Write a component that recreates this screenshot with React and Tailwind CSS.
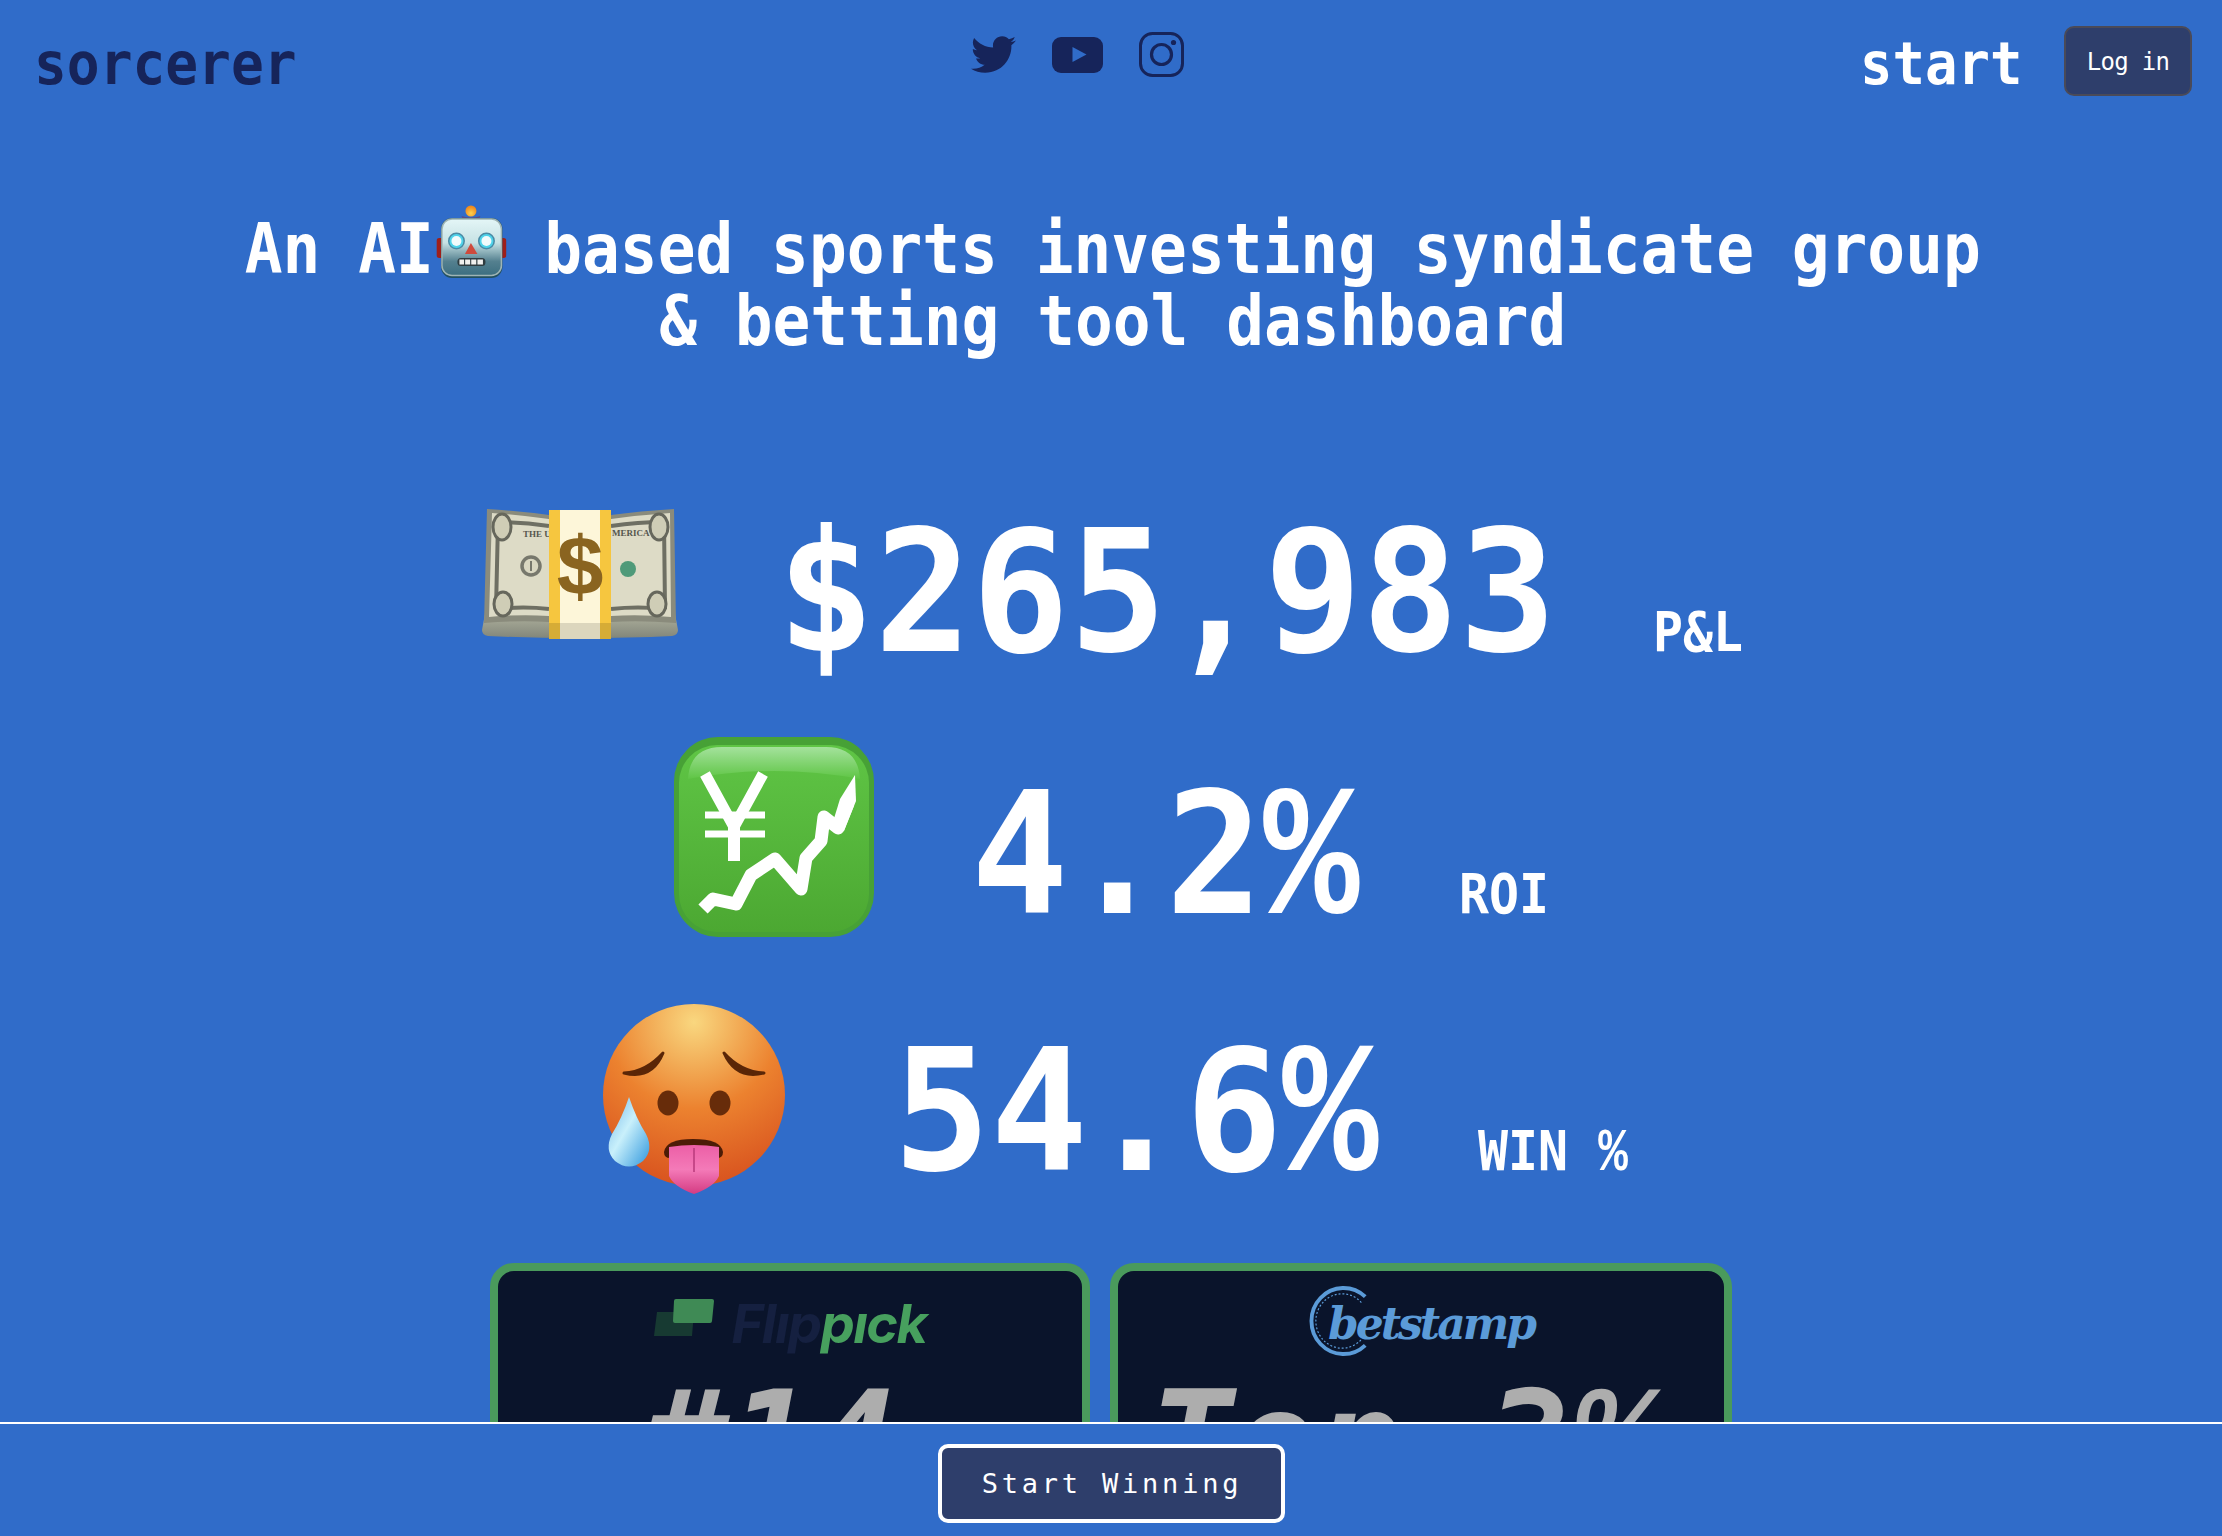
import { FaTwitter } from 'react-icons/fa'

const mono = "font-['DejaVu_Sans_Mono',monospace]"
const percent = "inline-block origin-left scale-x-90 font-['Liberation_Mono',monospace] text-[1.1em] leading-none"

function YoutubeIcon() {
  return (
    <svg viewBox="0 0 51 36" className="w-[51px] h-[36px]">
      <rect x="0" y="0" width="51" height="36" rx="9" fill="#16245a" />
      <path d="M20.5 10 L34.5 17.5 L20.5 25Z" fill="#306cc9" />
    </svg>
  )
}

function InstagramIcon() {
  return (
    <svg viewBox="0 0 45 45" className="w-[45px] h-[45px]" fill="none" stroke="#16245a">
      <rect x="1.5" y="1.5" width="42" height="42" rx="12" strokeWidth="3" />
      <circle cx="22.5" cy="22.5" r="10" strokeWidth="3.2" />
      <circle cx="34.5" cy="10.5" r="2.6" fill="#16245a" stroke="none" />
    </svg>
  )
}

function RobotEmoji() {
  return (
    <svg viewBox="0 0 70 73" className="inline-block w-[78px] h-[73px] ml-[3px] align-[-5px]" preserveAspectRatio="none">
      <defs>
        <linearGradient id="robotHead" x1="0" y1="0" x2="0" y2="1">
          <stop offset="0" stopColor="#e4f6f7" />
          <stop offset="0.42" stopColor="#c7e2e4" />
          <stop offset="0.75" stopColor="#54808f" />
          <stop offset="1" stopColor="#3c6e80" />
        </linearGradient>
        <radialGradient id="robotBall" cx="0.5" cy="0.7" r="0.6">
          <stop offset="0" stopColor="#fdd24f" />
          <stop offset="1" stopColor="#f08a1d" />
        </radialGradient>
      </defs>
      <rect x="0" y="33" width="7" height="20" rx="3" fill="#9d1f1a" />
      <rect x="63" y="33" width="7" height="20" rx="3" fill="#9d1f1a" />
      <path d="M25 11 Q35 14 44 11 Q42 18 35 18 Q27 18 25 11Z" fill="#5a4d86" />
      <circle cx="34.5" cy="6" r="5.5" fill="url(#robotBall)" />
      <rect x="4.6" y="13" width="61.4" height="60" rx="11" fill="#23505f" />
      <rect x="5.5" y="14" width="59.5" height="56.5" rx="10" fill="url(#robotHead)" stroke="#9fb4b4" strokeWidth="1.5" />
      <circle cx="20" cy="36" r="8.5" fill="#4a8ba5" />
      <circle cx="20" cy="36" r="7" fill="#4fd3ea" />
      <circle cx="20" cy="36" r="5" fill="#f2fbfc" />
      <circle cx="50" cy="36" r="8.5" fill="#4a8ba5" />
      <circle cx="50" cy="36" r="7" fill="#4fd3ea" />
      <circle cx="50" cy="36" r="5" fill="#f2fbfc" />
      <path d="M34.5 38 L41 49 L28.5 49Z" fill="#cf4a3c" />
      <rect x="21" y="53" width="28" height="8" rx="3.5" fill="#2f3c40" />
      <rect x="23" y="54.5" width="4.6" height="5" fill="#f0f0ee" />
      <rect x="28.7" y="54.5" width="5" height="5" fill="#f0f0ee" />
      <rect x="34.8" y="54.5" width="5" height="5" fill="#f0f0ee" />
      <rect x="41" y="54.5" width="5.5" height="5" fill="#f0f0ee" />
    </svg>
  )
}

function MoneyEmoji() {
  return (
    <svg viewBox="0 0 200 200" className="w-[200px] h-[200px] shrink-0">
      <defs>
        <linearGradient id="moneyStack" x1="0" y1="0" x2="0" y2="1">
          <stop offset="0" stopColor="#b3b5a1" />
          <stop offset="1" stopColor="#82867a" />
        </linearGradient>
      </defs>
      <path d="M5 140 Q50 136 100 138 Q150 136 195 140 L198 156 Q198 161 192 162 Q150 164 100 164 Q50 164 8 162 Q2 161 2 156Z" fill="url(#moneyStack)" />
      <path d="M7 35 Q40 37 69 41 L131 41 Q160 37 194 35 L196 149 Q160 146 131 148 L69 148 Q40 146 4 149Z" fill="#8a8b7c" />
      <path d="M12 39 Q40 41 69 45 L131 45 Q160 41 190 39 L191 143 Q160 140 131 142 L69 142 Q40 140 9 143Z" fill="#dddbc6" />
      <path d="M18 48 Q44 48 69 52 M131 52 Q158 48 184 48 M16 135 Q44 132 69 135 M131 135 Q158 132 185 135 M18 48 L16 135 M184 48 L185 135" stroke="#6e6f63" strokeWidth="4" fill="none" />
      <ellipse cx="22" cy="53" rx="9" ry="13" fill="#cfcdb6" stroke="#66675c" strokeWidth="3" />
      <ellipse cx="179" cy="53" rx="9" ry="13" fill="#cfcdb6" stroke="#66675c" strokeWidth="3" />
      <ellipse cx="23" cy="130" rx="9" ry="12" fill="#cfcdb6" stroke="#66675c" strokeWidth="3" />
      <ellipse cx="177" cy="130" rx="9" ry="12" fill="#cfcdb6" stroke="#66675c" strokeWidth="3" />
      <circle cx="51" cy="92" r="9" fill="#d9d7c1" stroke="#77786c" strokeWidth="3.5" />
      <path d="M51 87 L51 97" stroke="#77786c" strokeWidth="2" />
      <circle cx="148" cy="95" r="8" fill="#4f9a79" />
      <text x="43" y="63" fontSize="9" fontWeight="700" fill="#55564d" fontFamily="'Liberation Serif', serif">THE UN</text>
      <text x="132" y="62" fontSize="9" fontWeight="700" fill="#55564d" fontFamily="'Liberation Serif', serif">MERICA</text>
      <rect x="69" y="36" width="62" height="129" fill="#f6c63f" />
      <rect x="80" y="36" width="40" height="129" fill="#fdf6d9" />
      <rect x="69" y="149" width="62" height="16" fill="#000" opacity="0.13" />
      <text x="100" y="121" textAnchor="middle" fontSize="84" fontWeight="700" fill="#8a6420" fontFamily="'Liberation Sans', sans-serif">$</text>
    </svg>
  )
}

function ChartEmoji() {
  return (
    <svg viewBox="0 0 200 200" className="w-[200px] h-[200px] shrink-0">
      <defs>
        <linearGradient id="chartBg" x1="0" y1="0" x2="0" y2="1">
          <stop offset="0" stopColor="#5fc545" />
          <stop offset="1" stopColor="#4ca832" />
        </linearGradient>
        <linearGradient id="chartShine" x1="0" y1="0" x2="0" y2="1">
          <stop offset="0" stopColor="#a4e29c" />
          <stop offset="1" stopColor="#5fc545" />
        </linearGradient>
      </defs>
      <rect x="0" y="0" width="200" height="200" rx="44" fill="#47a136" />
      <rect x="5" y="8" width="190" height="187" rx="38" fill="url(#chartBg)" />
      <path d="M14 42 Q16 10 48 10 L152 10 Q184 10 186 42 Q100 26 14 42Z" fill="url(#chartShine)" />
      <path d="M31 37 L60 90 L89 37" stroke="#fff" strokeWidth="11" fill="none" />
      <path d="M60 88 L60 124" stroke="#fff" strokeWidth="12" fill="none" />
      <path d="M31 78 L91 78 M31 97 L91 97" stroke="#fff" strokeWidth="7" fill="none" />
      <polyline points="29,172 39,162 62,167 77,138 101,122 127,152 132,121 147,104 150,80 164,91 174,66" stroke="#fff" strokeWidth="13" fill="none" strokeLinejoin="round" />
      <path d="M166 62 L181 38 L182 64 L170 94 L158 88Z" fill="#fff" />
    </svg>
  )
}

function FaceEmoji() {
  return (
    <svg viewBox="0 0 200 200" className="w-[200px] h-[200px] shrink-0">
      <defs>
        <radialGradient id="faceSkin" cx="0.5" cy="0.1" r="0.95">
          <stop offset="0" stopColor="#f9d77f" />
          <stop offset="0.22" stopColor="#f3b25c" />
          <stop offset="0.5" stopColor="#ec822f" />
          <stop offset="1" stopColor="#d64e1d" />
        </radialGradient>
        <linearGradient id="faceTongue" x1="0" y1="0" x2="0" y2="1">
          <stop offset="0" stopColor="#ec5fa6" />
          <stop offset="0.5" stopColor="#f47ab8" />
          <stop offset="1" stopColor="#d43b82" />
        </linearGradient>
        <linearGradient id="faceTear" x1="0" y1="0" x2="1" y2="1">
          <stop offset="0" stopColor="#6fb6e8" />
          <stop offset="0.45" stopColor="#c9f0fb" />
          <stop offset="1" stopColor="#2f97dd" />
        </linearGradient>
      </defs>
      <circle cx="98" cy="95" r="91" fill="url(#faceSkin)" />
      <path d="M28 73 Q50 72 67 53 Q56 80 28 73Z" fill="#5a2607" stroke="#5a2607" strokeWidth="3" strokeLinejoin="round" />
      <path d="M128 53 Q145 72 168 73 Q140 80 128 53Z" fill="#5a2607" stroke="#5a2607" strokeWidth="3" strokeLinejoin="round" />
      <ellipse cx="72" cy="103" rx="10.5" ry="12.5" fill="#672c0a" />
      <ellipse cx="124" cy="103" rx="10.5" ry="12.5" fill="#672c0a" />
      <path d="M68 152 Q70 139 97 139 Q125 139 127 152 Q127 158 121 158 L74 158 Q68 158 68 152Z" fill="#4c1c06" />
      <path d="M73 147 Q98 143 123 147 L123 176 Q118 187 98 194 Q78 187 73 176Z" fill="url(#faceTongue)" />
      <path d="M98 148 L98 172" stroke="#b83a7b" strokeWidth="1.5" />
      <path d="M33 97 Q40 118 50 134 Q58 150 47 161 Q33 172 19 161 Q8 150 16 134 Q26 118 33 97Z" fill="url(#faceTear)" />
    </svg>
  )
}

function Stat({ emoji, value, unit, width, label, labelUnit, labelWidth, offset }) {
  return (
    <div className="flex justify-center items-start h-[263px]">
      {emoji}
      <div className={`flex items-baseline ml-[97px] ${offset}`}>
        <div className={`text-[170px] leading-[200px] font-bold text-white whitespace-nowrap origin-left scale-x-[0.952] ${mono} ${width}`}>
          {value}{unit && <span className={percent}>{unit}</span>}
        </div>
        <div className={`ml-[100px] text-[56px] leading-[60px] font-bold text-white whitespace-pre origin-left scale-x-[0.89] ${mono} ${labelWidth}`}>
          {label}{labelUnit && <span className={percent}>{labelUnit}</span>}
        </div>
      </div>
    </div>
  )
}

export default function App() {
  return (
    <div className="relative h-screen overflow-hidden bg-[#306cc9]">
      <header className="flex items-start pl-[34px] pr-[30px] pt-[26px]">
        <div className={`w-[264px] mt-[9px] text-[58px] leading-[58px] font-bold text-[#16245a] origin-left scale-x-[0.94] ${mono}`}>sorcerer</div>
        <div className="flex items-center gap-[36px] ml-[673px] mt-[6px] h-[45px] text-[#16245a]">
          <FaTwitter className="w-[45px] h-[45px]" />
          <YoutubeIcon />
          <InstagramIcon />
        </div>
        <div className={`ml-auto mt-[9px] w-[162px] text-[58px] leading-[58px] font-bold text-white origin-left scale-x-[0.93] ${mono}`}>start</div>
        <button className={`ml-[42px] w-[128px] h-[70px] pt-[1px] rounded-[10px] border-2 border-[#4a4a58] bg-[#2e3e6b] text-white text-[24px] tracking-[-0.7px] ${mono}`}>Log in</button>
      </header>

      <h1 className={`mt-[109px] pl-[4px] text-center text-[70px] leading-[72px] font-bold text-white whitespace-pre scale-x-[0.897] ${mono}`}>
        An AI<RobotEmoji /> based sports investing syndicate group{'\n'}& betting tool dashboard
      </h1>

      <section className="mt-[117px]">
        <Stat emoji={<MoneyEmoji />} value="$265,983" width="w-[776px]" label="P&L" labelWidth="w-[90px]" offset="mt-[18px]" />
        <Stat emoji={<ChartEmoji />} value="4.2" unit="%" width="w-[388px]" label="ROI" labelWidth="w-[90px]" offset="mt-[17px]" />
        <Stat emoji={<FaceEmoji />} value="54.6" unit="%" width="w-[485px]" label="WIN " labelUnit="%" labelWidth="w-[149px]" offset="mt-[11px]" />
      </section>

      <section className="flex justify-center gap-[20px]">
        <div className="w-[600px] h-[400px] shrink-0 rounded-[24px] border-8 border-[#4a9a5c] bg-[#0a142b] flex flex-col items-center">
          <div className="flex items-start h-[97px] pt-[26px]">
            <svg viewBox="0 0 60 38" className="w-[60px] h-[38px] mr-[18px] mt-[2px]">
              <path d="M3 13 L40 13 L38 37 L0 37Z" fill="#173a32" />
              <path d="M22 0 L58 0 Q60 0 60 2 L58 22 Q58 24 56 24 L21 24 Q19 24 19 22 L20 2 Q20 0 22 0Z" fill="#3f8a55" />
            </svg>
            <span className="font-['Inter',sans-serif] italic font-bold text-[54px] tracking-[-1.5px] leading-[54px]">
              <span className="text-[#152040]">Flıp</span>
              <span className="text-[#47a05e]">pıck</span>
            </span>
          </div>
          <div className={`mr-[40px] text-[140px] leading-[150px] font-bold italic text-[#adadad] ${mono}`}>#14</div>
        </div>
        <div className="w-[622px] h-[400px] shrink-0 rounded-[24px] border-8 border-[#4a9a5c] bg-[#0a142b] flex flex-col items-center">
          <div className="relative flex items-start h-[97px] pt-[31px] pl-[20px]">
            <svg viewBox="0 0 70 72" className="absolute left-[-3px] top-[15px] w-[68px] h-[70px]">
              <path d="M62 11 A33 34 0 1 0 62 61" fill="none" stroke="#5b9bd8" strokeWidth="4" />
              <path d="M58 17 A27 28 0 1 0 58 55" fill="none" stroke="#5b9bd8" strokeWidth="1.2" strokeDasharray="2 2" />
            </svg>
            <span className="relative font-['DejaVu_Serif',serif] italic font-bold text-[44px] tracking-[-3px] leading-[44px] text-[#5b9bd8]">betstamp</span>
          </div>
          <div className={`mr-[30px] text-[140px] leading-[150px] font-bold italic text-[#adadad] whitespace-pre ${mono}`}>Top 3<span className={percent}>%</span></div>
        </div>
      </section>

      <footer className="absolute bottom-0 inset-x-0 h-[114px] border-t-2 border-white bg-[#306cc9] flex justify-center pt-[20px]">
        <button className={`w-[347px] h-[79px] pt-[2px] pl-[2px] rounded-[10px] border-4 border-white bg-[#2e3e6b] text-white text-[27px] tracking-[3.8px] ${mono}`}>Start Winning</button>
      </footer>
    </div>
  )
}
